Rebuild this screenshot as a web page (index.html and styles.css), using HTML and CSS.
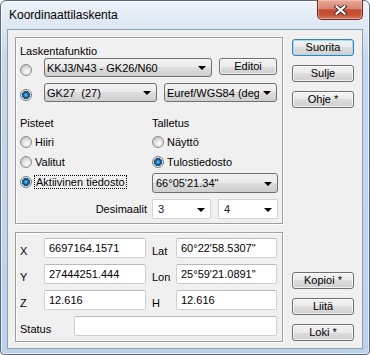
FILE: index.html
```html
<!DOCTYPE html>
<html lang="fi">
<head>
    <meta charset="UTF-8">
    <title>Koordinaattilaskenta</title>
    <link rel="stylesheet" href="styles.css">
</head>
<body>
    <div class="window">
        <div class="titlebar">
            <span class="title">Koordinaattilaskenta</span>
            <button class="close" title="Sulje">
                <svg width="13" height="10" viewBox="0 0 13 10">
                    <path d="M2.5 1.5 L10.5 8.5 M10.5 1.5 L2.5 8.5" stroke="#3a2626" stroke-width="4" stroke-linecap="square" fill="none"/>
                    <path d="M2.5 1.5 L10.5 8.5 M10.5 1.5 L2.5 8.5" stroke="#fff" stroke-width="2.2" stroke-linecap="square" fill="none"/>
                </svg>
            </button>
        </div>

        <div class="client">
            <div class="main">
                <div class="group calc">
                    <div class="head">Laskentafunktio</div>
                    <div class="fn-row">
                        <input type="radio" class="radio" name="fn">
                        <div class="combo w-kkj"><span class="val">KKJ3/N43 - GK26/N60</span><span class="arrow"></span></div>
                        <button class="btn edit">Editoi</button>
                    </div>
                    <div class="fn-row second">
                        <input type="radio" class="radio" name="fn" checked>
                        <div class="combo w-half"><span class="val">GK27  (27)</span><span class="arrow"></span></div>
                        <div class="combo w-half"><span class="val">Euref/WGS84 (degrees)</span><span class="arrow"></span></div>
                    </div>

                    <div class="split">
                        <div>
                            <div class="head">Pisteet</div>
                            <div class="opts">
                                <label class="opt"><input type="radio" class="radio" name="pts"><span>Hiiri</span></label>
                                <label class="opt"><input type="radio" class="radio" name="pts"><span>Valitut</span></label>
                                <label class="opt"><input type="radio" class="radio" name="pts" checked><span class="focus">Aktiivinen tiedosto</span></label>
                            </div>
                        </div>
                        <div>
                            <div class="head">Talletus</div>
                            <div class="opts">
                                <label class="opt"><input type="radio" class="radio" name="out"><span>Näyttö</span></label>
                                <label class="opt"><input type="radio" class="radio" name="out" checked><span>Tulostiedosto</span></label>
                            </div>
                            <div class="combo w-full"><span class="val">66°05'21.34"</span><span class="arrow"></span></div>
                        </div>
                    </div>

                    <div class="split decimals">
                        <div class="dec-label">Desimaalit</div>
                        <div class="dec-combos">
                            <div class="combo edit-combo w-dec1"><span class="val">3</span><span class="arrow"></span></div>
                            <div class="combo edit-combo w-dec2"><span class="val">4</span><span class="arrow"></span></div>
                        </div>
                    </div>
                </div>

                <div class="group coords">
                    <div class="coord-grid">
                        <span class="lbl">X</span>
                        <div class="field">6697164.1571</div>
                        <span class="lbl lbl-r">Lat</span>
                        <div class="field">60°22'58.5307"</div>

                        <span class="lbl">Y</span>
                        <div class="field">27444251.444</div>
                        <span class="lbl lbl-r">Lon</span>
                        <div class="field">25°59'21.0891"</div>

                        <span class="lbl">Z</span>
                        <div class="field">12.616</div>
                        <span class="lbl lbl-r">H</span>
                        <div class="field">12.616</div>
                    </div>
                    <div class="status-row">
                        <span class="lbl status-lbl">Status</span>
                        <div class="field status"></div>
                    </div>
                </div>
            </div>

            <div class="side">
                <div class="stack">
                    <button class="btn default">Suorita</button>
                    <button class="btn">Sulje</button>
                    <button class="btn">Ohje *</button>
                </div>
                <div class="stack bottom">
                    <button class="btn">Kopioi *</button>
                    <button class="btn">Liitä</button>
                    <button class="btn">Loki *</button>
                </div>
            </div>
        </div>
    </div>
</body>
</html>
```

FILE: styles.css
```css
* {
    box-sizing: border-box;
}

body {
    margin: 0;
    background: #fff;
    font-family: "Liberation Sans", Arial, sans-serif;
    font-size: 11px;
    color: #000;
}

/* window frame */

.window {
    width: 370px;
    height: 355px;
    display: flex;
    flex-direction: column;
    border: 1px solid #5b6b7e;
    border-radius: 6px 6px 4px 4px;
    background: linear-gradient(#eef3f9, #dbe6f2 28px, #c6d8ec 60px, #bdd2e9);
    box-shadow: inset 0 0 0 1px rgba(255, 255, 255, 0.6);
}

.titlebar {
    height: 28px;
    display: flex;
    align-items: center;
    padding-left: 8px;
}

.title {
    flex: 1;
    font-size: 12px;
}

.close {
    align-self: flex-start;
    width: 46px;
    height: 20px;
    margin: -1px 6px 0 0;
    padding: 0;
    display: flex;
    align-items: center;
    justify-content: center;
    border: 1px solid #5e2b22;
    border-top: none;
    border-radius: 0 0 5px 5px;
    background: linear-gradient(#e9aa99, #d68672 45%, #c24a31 52%, #c75237 80%, #d9806a);
    box-shadow: inset 0 0 0 1px rgba(255, 200, 190, 0.5);
}

.client {
    flex: 1;
    display: flex;
    gap: 9px;
    margin: 0 6px 5px;
    padding: 7px 8px 6px 7px;
    border: 1px solid #8d9fb3;
    background: #f0f0f0;
}

.main {
    width: 268px;
    display: flex;
    flex-direction: column;
    gap: 8px;
}

.group {
    border: 1px solid #a0a0a0;
    box-shadow: inset 1px 1px #fff, 1px 1px #fff;
}

/* top group */

.calc {
    height: 187px;
    padding: 6px 4px 0 4px;
}

.head {
    line-height: 14px;
}

.fn-row {
    display: flex;
    align-items: flex-start;
    gap: 7px;
    height: 19px;
}

.fn-row .radio {
    margin: 6px 5px 0 0;
}

.fn-row.second {
    margin-top: 6px;
}

.split {
    display: grid;
    grid-template-columns: 132px 126px;
    margin-top: 14px;
}

.opts {
    margin-top: 2px;
}

.opt {
    height: 20px;
    display: flex;
    align-items: center;
    gap: 3px;
}

.focus {
    outline: 1px dotted #000;
    padding: 0 1px;
    line-height: 12px;
}

.decimals {
    margin-top: 6px;
    height: 20px;
}

.dec-label {
    padding-right: 5px;
    text-align: right;
    line-height: 20px;
}

.dec-combos {
    display: flex;
    gap: 7px;
}

/* radio buttons */

.radio {
    appearance: none;
    flex: none;
    width: 12px;
    height: 12px;
    margin: 0;
    border: 1px solid #8e8e8e;
    border-radius: 50%;
    background: radial-gradient(circle at 60% 65%, #fbfbfb 0, #f0f0f0 2px, #d6d6d6 5px, #c9c9c9 6px);
}

.radio:checked {
    border-color: #6f7c88;
    background: radial-gradient(circle at 50% 50%, #6fd0f6 0, #2b8fcb 1.5px, #0d4f86 3px, #294a66 3.8px, #e4e4e4 4.2px, #f2f2f2 6px);
}

/* combo boxes */

.combo {
    height: 19px;
    display: flex;
    align-items: center;
    padding-left: 2px;
    border: 1px solid #707070;
    border-radius: 3px;
    background: linear-gradient(#f2f2f2, #ebebeb 50%, #dddddd 50%, #cfcfcf);
}

.combo .val {
    flex: 1;
    overflow: hidden;
    white-space: pre;
}

.arrow {
    flex: none;
    width: 0;
    height: 0;
    margin: 1px 5px 0 4px;
    border-left: 4px solid transparent;
    border-right: 4px solid transparent;
    border-top: 4px solid #000;
}

.w-kkj { width: 168px; }
.w-half { width: 113px; }
.w-full { width: 126px; height: 20px; margin-top: 1px; padding-left: 3px; }
.w-dec1 { width: 59px; }
.w-dec2 { width: 60px; }

.edit-combo {
    height: 20px;
    padding-left: 5px;
    border-color: #d4d4d4;
    border-radius: 1px;
    background: #fff;
    color: #111a33;
}

/* buttons */

.btn {
    height: 17px;
    padding: 0;
    border: 1px solid #707070;
    border-radius: 3px;
    background: linear-gradient(#f2f2f2, #ebebeb 50%, #dddddd 50%, #cfcfcf);
    font: inherit;
    color: #000;
    line-height: 15px;
    box-shadow: inset 0 0 0 1px rgba(255, 255, 255, 0.7);
}

.btn.default {
    border-color: #3c7fb1;
    box-shadow: inset 0 0 0 1px #9fdcf6;
}

.edit {
    width: 58px;
}

.side {
    width: 62px;
    display: flex;
    flex-direction: column;
    padding: 2px 0 1px;
}

.stack {
    display: flex;
    flex-direction: column;
    gap: 9px;
}

.stack.bottom {
    margin-top: auto;
}

/* coordinates group */

.coords {
    flex: 1;
    padding: 5px 5px 5px 4px;
}

.coord-grid {
    display: grid;
    grid-template-columns: 24px 102px 30px 101px;
    grid-auto-rows: 20px;
    row-gap: 6px;
}

.lbl {
    align-self: end;
    line-height: 14px;
}

.lbl-r {
    padding-left: 6px;
}

.field {
    height: 20px;
    padding-left: 4px;
    border: 1px solid #cfcfcf;
    border-top-color: #b9b9b9;
    border-radius: 2px;
    background: #fff;
    line-height: 18px;
    white-space: nowrap;
    overflow: hidden;
}

.status-row {
    display: flex;
    height: 20px;
    margin-top: 6px;
}

.status-lbl {
    width: 54px;
}

.status {
    flex: 1;
}
```
